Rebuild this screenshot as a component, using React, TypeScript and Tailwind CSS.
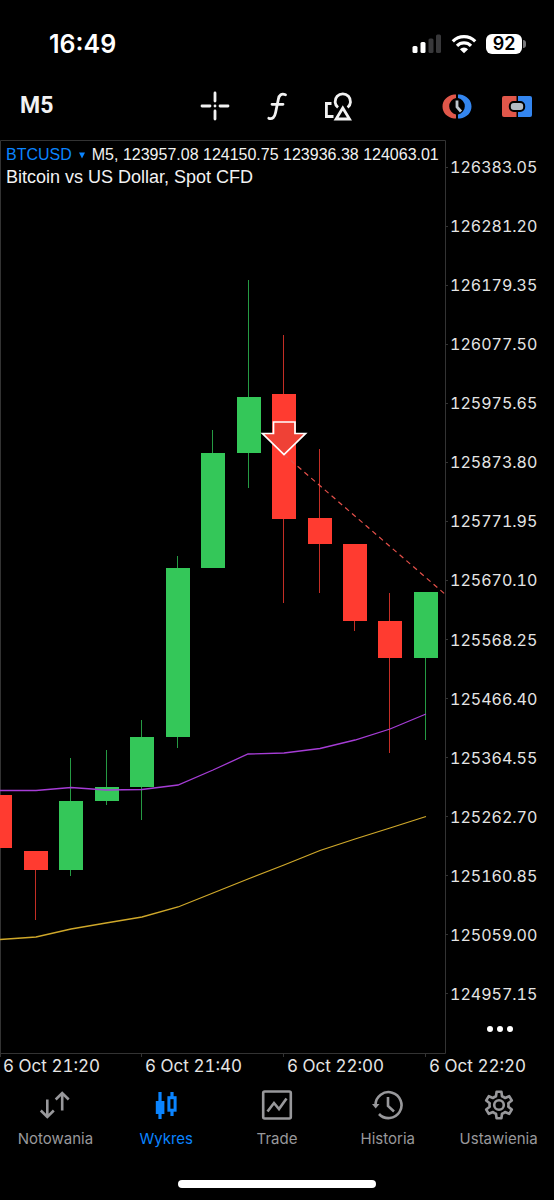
import type { ReactNode } from 'react';

type Candle = { x: number; high: number; top: number; bottom: number; low: number; up: boolean };

const PRICES = [
  '126383.05', '126281.20', '126179.35', '126077.50', '125975.65',
  '125873.80', '125771.95', '125670.10', '125568.25', '125466.40',
  '125364.55', '125262.70', '125160.85', '125059.00', '124957.15',
];

const TIMES = ['6 Oct 21:20', '6 Oct 21:40', '6 Oct 22:00', '6 Oct 22:20'];

// pixel rows inside the 446x914 plot
const CANDLES: Candle[] = [
  { x: 0, high: 655, top: 655, bottom: 708, low: 708, up: false },
  { x: 36, high: 711, top: 711, bottom: 730, low: 780, up: false },
  { x: 71, high: 618, top: 661, bottom: 730, low: 736, up: true },
  { x: 107, high: 610, top: 647, bottom: 661, low: 665, up: true },
  { x: 142, high: 580, top: 597, bottom: 647, low: 680, up: true },
  { x: 178, high: 416, top: 428, bottom: 597, low: 608, up: true },
  { x: 213, high: 290, top: 313, bottom: 428, low: 428, up: true },
  { x: 249, high: 140, top: 257, bottom: 313, low: 348, up: true },
  { x: 284, high: 195, top: 254, bottom: 379, low: 463, up: false },
  { x: 320, high: 309, top: 378, bottom: 404, low: 453, up: false },
  { x: 355, high: 404, top: 404, bottom: 481, low: 491, up: false },
  { x: 390, high: 453, top: 481, bottom: 518, low: 613, up: false },
  { x: 426, high: 452, top: 452, bottom: 518, low: 600, up: true },
];

function Chart() {
  return (
    <svg viewBox="0 0 446 914" className="block w-full overflow-visible" role="img" aria-label="BTCUSD M5">
      <g stroke="#333333" strokeWidth="1" fill="none">
        <path d="M0.5 0.5H445.5V913.5H0.5Z" />
        <path d="M0.5 913v4M141.5 913v4M283.5 913v4M425.5 913v4" />
      </g>
      {CANDLES.map((c) => (
        <g key={c.x}>
          <rect x={c.x - 1} y={c.high} width="1" height={c.low - c.high} fill={c.up ? '#259a43' : '#c42e25'} />
          <rect x={c.x - 12} y={c.top} width="24" height={c.bottom - c.top} fill={c.up ? '#34c759' : '#ff3b30'} />
        </g>
      ))}
      <path
        d="M0 650.5H36L71 647.5L106 650L142 649.5L178 645L213 630L248 614L284 613L320 608.5L355 600L390 589L426 574"
        fill="none" stroke="#a63dd6" strokeWidth="1.3"
      />
      <path
        d="M0 799.5L36 797L71 789L106 783L142 777L178 767L213 753L248 739L284 725L320 710.5L355 699L390 688L426 676.5"
        fill="none" stroke="#cfa82a" strokeWidth="1.3"
      />
      <path d="M284 314.5L446 455" stroke="#e5504a" strokeWidth="1.2" strokeDasharray="5 4" />
      <path
        d="M273.5 282H295V293.5H305.5L284 314.5L262.5 293.5H273.5Z"
        fill="#ef4136" stroke="#ffffff" strokeWidth="1.7"
      />
    </svg>
  );
}

function StatusBar() {
  return (
    <div className="flex h-20 items-center justify-between pt-2 pr-7 pl-[49px] text-white">
      <span className="text-[25px] leading-8 font-semibold">16:49</span>
      <div className="flex items-center gap-[9px]">
        <svg width="30" height="20" viewBox="0 0 30 20" fill="#ffffff">
          <rect x="0.5" y="12" width="5" height="7" rx="1.5" />
          <rect x="8.5" y="8" width="5" height="11" rx="1.5" />
          <rect x="16.5" y="4.5" width="5" height="14.5" rx="1.5" fill="#38383a" />
          <rect x="24" y="0.5" width="5" height="18.5" rx="1.5" fill="#38383a" />
        </svg>
        <svg width="26" height="20" viewBox="0 0 26 20" fill="none" stroke="#ffffff" strokeWidth="3.2">
          <path d="M1.8 7.3A15.8 15.8 0 0 1 24.2 7.3" />
          <path d="M6 11.8A9.9 9.9 0 0 1 20 11.8" />
          <path d="M13 19.3L8.9 15.2A5.8 5.8 0 0 1 17.1 15.2Z" fill="#ffffff" stroke="none" />
        </svg>
        <div className="flex items-center gap-px">
          <div className="flex h-5 w-9 items-center justify-center rounded-md bg-white text-[18px] leading-5 font-semibold text-black">
            92
          </div>
          <div className="h-2 w-[3px] rounded-r bg-[#77777a]" />
        </div>
      </div>
    </div>
  );
}

function Toolbar() {
  return (
    <div className="flex h-[60px] items-center justify-between pr-[22px] pb-2 pl-5">
      <button className="w-20 text-left font-['Roboto',sans-serif] text-[23px] leading-8 font-bold text-[#f2f2f2]">
        M5
      </button>
      <div className="flex items-center gap-8 pl-3">
        <button aria-label="Crosshair">
          <svg width="30" height="30" viewBox="0 0 30 30" fill="none" stroke="#f2f2f2" strokeWidth="2.8" strokeLinecap="round">
            <path d="M15 2V10M15 20V28M2 15H10M20 15H28M15 15h.01" />
          </svg>
        </button>
        <button aria-label="Indicators">
          <svg width="30" height="30" viewBox="0 0 30 30" fill="none" stroke="#f2f2f2" strokeWidth="2.8" strokeLinecap="round">
            <path d="M23.5 3.7C19.5 2.2 17.2 3.8 16.4 8L13.6 21.5C12.7 26.3 10.5 28.3 6.8 27.3M10 13.3H21" />
          </svg>
        </button>
        <button aria-label="Objects">
          <svg width="30" height="30" viewBox="0 0 30 30" fill="none" stroke="#f2f2f2" strokeWidth="2.8">
            <path d="M7.5 12.5H2.4V25.5H9.5" />
            <path d="M14 16.5A7.7 7.7 0 1 1 23.6 16.5" />
            <path d="M18.8 17L25.5 28H12.1Z" />
          </svg>
        </button>
      </div>
      <div className="flex items-center gap-[30px]">
        <button aria-label="Trade history">
          <svg width="30" height="30" viewBox="0 0 30 30">
            <path d="M14 3.5V7A8.4 8.4 0 0 0 14 23.5V27.5H12C5 26.5 0.5 21.5 0.5 15.5S5 4.5 12 3.5Z" fill="#e0574a" />
            <path d="M16 3.5V7A8.4 8.4 0 0 1 16 23.5V27.5H18C25 26.5 29.5 21.5 29.5 15.5S25 4.5 18 3.5Z" fill="#3486f0" />
            <path d="M15 9.5V16L19 20.5" fill="none" stroke="#bfc7cf" strokeWidth="2.8" />
          </svg>
        </button>
        <button aria-label="One click trading">
          <svg width="30" height="30" viewBox="0 0 30 30">
            <path d="M2 5H14.5V26H2A2 2 0 0 1 0 24V7A2 2 0 0 1 2 5Z" fill="#e0574a" />
            <path d="M16 5H28A2 2 0 0 1 30 7V24A2 2 0 0 1 28 26H16Z" fill="#3486f0" />
            <rect x="7.8" y="11" width="14.4" height="9" rx="4" fill="#b4bcc4" stroke="#000000" strokeWidth="2" />
          </svg>
        </button>
      </div>
    </div>
  );
}

function Tab({ label, active, children }: { label: string; active?: boolean; children: ReactNode }) {
  return (
    <button className={`flex flex-1 flex-col items-center gap-2 ${active ? 'text-[#0a84ff]' : 'text-[#98989b]'}`}>
      <svg width="32" height="32" viewBox="0 0 32 32" fill="none" stroke="currentColor" strokeWidth="2.6">
        {children}
      </svg>
      <span className="text-[15px] leading-5">{label}</span>
    </button>
  );
}

export default function App() {
  return (
    <main className="flex min-h-screen flex-col bg-black font-['Inter',sans-serif]">
      <StatusBar />
      <Toolbar />

      <section className="flex">
        <div className="relative min-w-0 flex-1">
          <Chart />
          <div className="absolute top-1 left-[6px] font-['Liberation_Sans',sans-serif] text-[16px] leading-[22px] whitespace-nowrap text-[#f2f2f2]">
            <div className="flex items-center">
              <button className="flex items-center gap-[7px] text-[#0a84ff]">
                BTCUSD
                <svg width="6" height="7" viewBox="0 0 6 7" fill="currentColor">
                  <path d="M0 0.5H6L3 6.5Z" />
                </svg>
              </button>
              <span className="pl-[7px]">M5, 123957.08 124150.75 123936.38 124063.01</span>
            </div>
            <div className="text-[18px]">Bitcoin vs US Dollar, Spot CFD</div>
          </div>
        </div>

        <div className="flex w-[108px] flex-col pt-[17px] text-[#e5e5e5]">
          <ul className="flex flex-1 flex-col justify-between text-[16px] leading-5 tabular-nums">
            {PRICES.map((p) => (
              <li key={p} className="flex items-center gap-[2px]">
                <span className="h-px w-[2px] bg-[#333333]" />
                {p}
              </li>
            ))}
          </ul>
          <button aria-label="More" className="flex h-[50px] items-center justify-center gap-1">
            <span className="size-[6px] rounded-full bg-white" />
            <span className="size-[6px] rounded-full bg-white" />
            <span className="size-[6px] rounded-full bg-white" />
          </button>
        </div>
      </section>

      <div className="flex h-6 pl-[3px] text-[17px] leading-6 whitespace-nowrap text-[#e5e5e5] tabular-nums">
        {TIMES.map((t) => (
          <span key={t} className="w-[142px] shrink-0 last:w-auto">{t}</span>
        ))}
      </div>

      <nav className="flex pt-[11px]">
        <Tab label="Notowania">
          <path d="M8.3 10.5V28M1.8 21.5L8.3 28L14.8 21.5M23.2 21.5V4M16.7 10.5L23.2 4L29.7 10.5" />
        </Tab>
        <Tab label="Wykres" active>
          <path d="M10 3V30M22 3V8M22 22V27" strokeWidth="3.2" />
          <rect x="5.8" y="12" width="8.6" height="13" fill="currentColor" stroke="none" />
          <rect x="18.9" y="8.7" width="6.2" height="12.5" strokeWidth="3" />
        </Tab>
        <Tab label="Trade">
          <rect x="2.2" y="2.5" width="27.6" height="27" rx="1.5" />
          <path d="M6.5 22.5L13 14L18 20L25.5 9.5" />
        </Tab>
        <Tab label="Historia">
          <path d="M3.5 16A13 13 0 1 1 7 25" />
          <path d="M0 15H7.5L3.7 19.5Z" fill="currentColor" stroke="none" />
          <path d="M16 8V17L22 22.5" />
        </Tab>
        <Tab label="Ustawienia">
          <path
            d="M13.6 2.8H18.4L19 7.2A9.5 9.5 0 0 1 22 9L26.2 7.2L28.8 11.4L25.3 14.2A9.5 9.5 0 0 1 25.3 17.8L28.8 20.6L26.2 24.8L22 23A9.5 9.5 0 0 1 19 24.8L18.4 29.2H13.6L13 24.8A9.5 9.5 0 0 1 10 23L5.8 24.8L3.2 20.6L6.7 17.8A9.5 9.5 0 0 1 6.7 14.2L3.2 11.4L5.8 7.2L10 9A9.5 9.5 0 0 1 13 7.2Z"
            strokeLinejoin="round"
          />
          <circle cx="16" cy="16" r="4.8" />
        </Tab>
      </nav>

      <div className="mx-auto mt-auto mb-3 h-2 w-[198px] rounded-full bg-white" />
    </main>
  );
}
